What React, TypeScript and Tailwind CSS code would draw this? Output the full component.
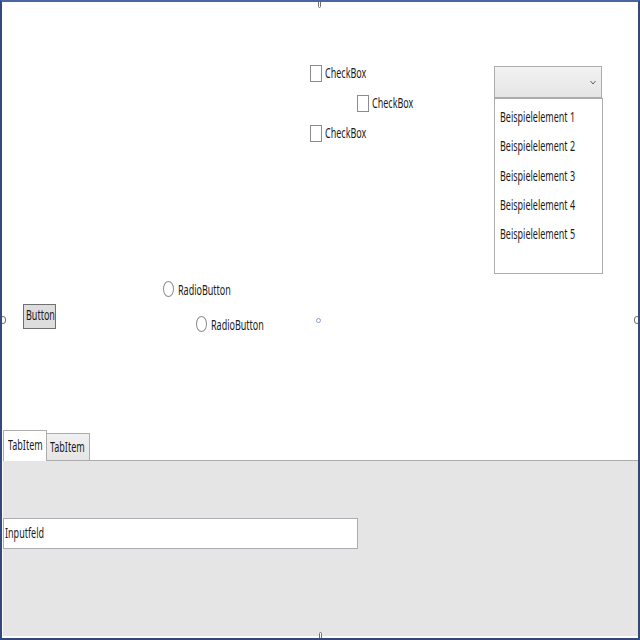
import React from "react";

function T({ children }: { children: React.ReactNode }) {
  return (
    <span className="relative top-[-1px] inline-block origin-left scale-x-[0.6] font-['Noto_Sans',sans-serif] text-[15px] text-[#1a1a1a] leading-none whitespace-nowrap">
      {children}
    </span>
  );
}

function CheckBox({ indent }: { indent?: boolean }) {
  return (
    <div className={`flex items-center gap-[3px] h-[17px] ${indent ? "ml-[47px]" : ""}`}>
      <div className="w-[12px] h-[17px] border border-[#8c8c8c] bg-white" />
      <T>CheckBox</T>
    </div>
  );
}

function Radio({ indent }: { indent?: boolean }) {
  return (
    <div className={`flex items-center gap-[4px] h-[16px] ${indent ? "ml-[33px]" : ""}`}>
      <div className="w-[11px] h-[16px] rounded-[50%] border border-[#8c8c8c] bg-white" />
      <div className="pt-[2px]">
        <T>RadioButton</T>
      </div>
    </div>
  );
}

export default function App() {
  const items = [1, 2, 3, 4, 5];
  return (
    <div className="w-[640px] h-[640px] bg-white border-2 border-[#34497a] border-t-[#4a66a0] flex flex-col overflow-hidden relative">
      <div className="relative flex-1">
        {/* designer canvas: controls sit at their canvas positions */}
        <div className="absolute left-[308px] top-[63px] flex flex-col gap-[13px]">
          <CheckBox />
          <CheckBox indent />
          <CheckBox />
        </div>

        <div className="absolute left-[492px] top-[64px] w-[109px] flex flex-col">
          <div className="w-[108px] h-[32px] border border-[#acacac] bg-gradient-to-b from-[#f2f2f2] to-[#e5e5e5] flex items-center justify-end pr-[5px]">
            <svg width="6" height="5" viewBox="0 0 6 5">
              <path d="M0.5 1 L3 4 L5.5 1" fill="none" stroke="#606060" strokeWidth="1" />
            </svg>
          </div>
          <div className="h-[176px] border border-[#acacac] bg-white flex flex-col pt-[6px] pl-[5px]">
            {items.map((i) => (
              <div key={i} className="h-[29.3px]">
                <T>Beispielelement {i}</T>
              </div>
            ))}
          </div>
        </div>

        <div className="absolute left-[161px] top-[279px] flex flex-col gap-[19px]">
          <Radio />
          <Radio indent />
        </div>

        <div className="absolute left-[21px] top-[302px] w-[33px] h-[25px] border border-[#707070] bg-[#dddddd] flex items-center pl-[2px] pb-[2px]">
          <T>Button</T>
        </div>

        <div className="absolute left-[314px] top-[316px] w-[5px] h-[5px] rounded-full border border-[#8aa0d0]" />
        <div className="absolute left-[316px] top-[-2px] w-[3px] h-[8px] rounded-full border border-[#707070] bg-white" />
        <div className="absolute left-[-2px] top-[314px] w-[6px] h-[8px] rounded-full border border-[#707070] bg-white" />
        <div className="absolute right-[-2px] top-[314px] w-[6px] h-[8px] rounded-full border border-[#707070] bg-white" />
      </div>

      <div className="flex flex-col h-[208px] pl-[1px] pb-[2px]">
        <div className="flex items-end h-[30px]">
          <div className="h-[31px] w-[44px] bg-white border border-b-0 border-[#acacac] flex items-center pl-[4px] pb-[1px] relative z-10 -mb-px">
            <T>TabItem</T>
          </div>
          <div className="h-[27px] w-[43px] bg-gradient-to-b from-[#f0f0f0] to-[#e5e5e5] border border-l-0 border-b-0 border-[#acacac] flex items-center pl-[3px]">
            <T>TabItem</T>
          </div>
        </div>
        <div className="flex-1 bg-[#e5e5e5] border-t border-[#acacac] pt-[57px] relative">
          <div className="w-[355px] h-[31px] bg-white border border-[#abadb3] flex items-center pl-[1px]">
            <T>Inputfeld</T>
          </div>
          <div className="absolute left-[316px] bottom-[-4px] w-[3px] h-[8px] rounded-full border border-[#707070] bg-white" />
        </div>
      </div>
    </div>
  );
}
